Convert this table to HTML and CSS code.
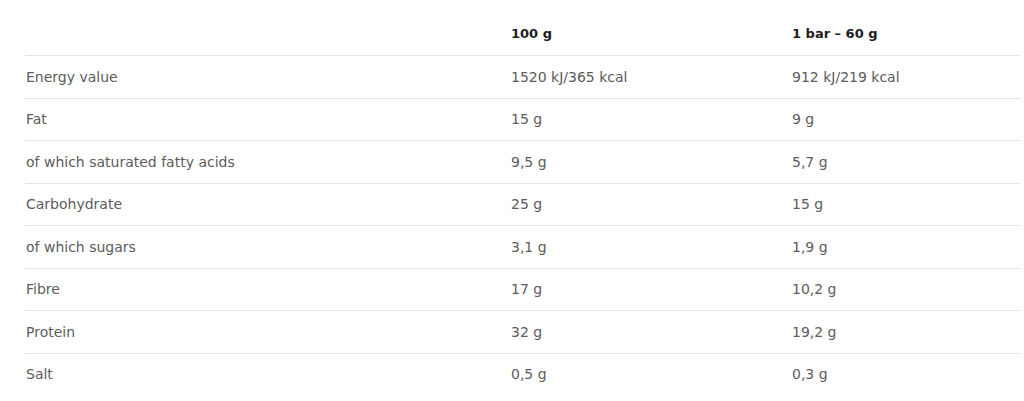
FILE: index.html
```html
<!DOCTYPE html>
<html lang="en">
<head>
<meta charset="utf-8">
<title>Nutrition facts</title>
<link rel="stylesheet" href="styles.css">
</head>
<body>
<div class="wrap">
  <table class="nutrition">
    <colgroup>
      <col class="c-name">
      <col class="c-100">
      <col class="c-bar">
    </colgroup>
    <thead>
      <tr><th></th><th>100 g</th><th>1 bar – 60 g</th></tr>
    </thead>
    <tbody>
      <tr><td>Energy value</td><td>1520 kJ/365 kcal</td><td>912 kJ/219 kcal</td></tr>
      <tr><td>Fat</td><td>15 g</td><td>9 g</td></tr>
      <tr><td>of which saturated fatty acids</td><td>9,5 g</td><td>5,7 g</td></tr>
      <tr><td>Carbohydrate</td><td>25 g</td><td>15 g</td></tr>
      <tr><td>of which sugars</td><td>3,1 g</td><td>1,9 g</td></tr>
      <tr><td>Fibre</td><td>17 g</td><td>10,2 g</td></tr>
      <tr><td>Protein</td><td>32 g</td><td>19,2 g</td></tr>
      <tr><td>Salt</td><td>0,5 g</td><td>0,3 g</td></tr>
    </tbody>
  </table>
</div>
</body>
</html>
```
FILE: styles.css
```css
html, body {
  margin: 0;
  padding: 0;
  background: #ffffff;
}
.wrap {
  padding: 12px 4px 0 25px;
}
.nutrition {
  width: 995px;
  border-collapse: collapse;
  table-layout: fixed;
  font-family: "DejaVu Sans", sans-serif;
  font-size: 14px;
  color: #5c5c5c;
}
.c-name { width: 485px; }
.c-100 { width: 281px; }
.c-bar { width: 229px; }
.nutrition th,
.nutrition td {
  text-align: left;
  padding: 0 0 0 1px;
  height: 41.5px;
  vertical-align: middle;
  white-space: nowrap;
}
.nutrition th {
  height: 43px;
  font-size: 13px;
  font-weight: bold;
  color: #1e1e1e;
  border-bottom: 1px solid #e4e4e4;
}
.nutrition tbody tr + tr td {
  border-top: 1px solid #e4e4e4;
}
```
